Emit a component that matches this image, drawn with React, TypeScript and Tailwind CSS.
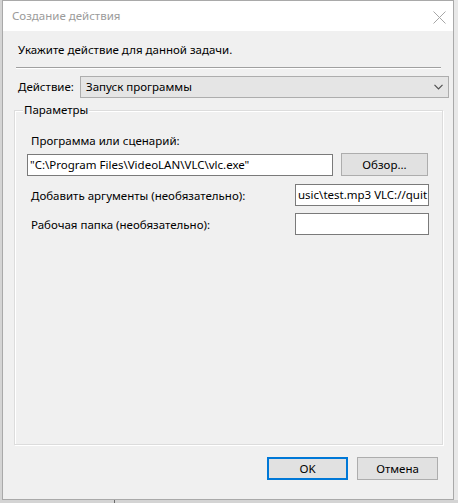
import React from 'react';

const font = { fontFamily: '"Noto Sans", "Open Sans", Arial, sans-serif' };

const TextBox = ({ value, width }: { value?: string; width: string }) => (
  <div className={`${width} h-[22px] bg-white border border-[#7a7a7a] flex items-center overflow-hidden whitespace-nowrap px-[2px]`}>
    {value}
  </div>
);

export default function App() {
  return (
    <div
      className="relative w-[458px] h-[503px] bg-[#d4d4d4] overflow-hidden text-[11.5px] text-black leading-[16px]"
      style={font}
    >
      {/* things behind the dialog */}
      <div className="absolute left-[114px] top-[499px] w-px h-[4px] bg-[#6b6b6b]" />
      <div className="absolute left-[454px] top-0 w-[4px] h-[500px] bg-[#e8e8e8]" />

      <div className="absolute left-[2px] top-0 w-[452px] h-[500px] border border-[#a9a9a9] bg-[#f0f0f0] flex flex-col">
        {/* title bar */}
        <div className="h-[30px] bg-white flex items-center justify-between pl-[9px] pr-[7px] shrink-0">
          <span className="text-[#9b9b9b]">Создание действия</span>
          <svg width="13" height="13" viewBox="0 0 13 13" className="mt-[2px]">
            <path d="M0.5 0.5 L12.5 12.5 M12.5 0.5 L0.5 12.5" stroke="#a6a6a6" strokeWidth="1" fill="none" />
          </svg>
        </div>

        {/* body */}
        <div className="flex flex-col flex-1">
          <div className="mt-[11px] ml-[15px]">Укажите действие для данной задачи.</div>

          <div className="mt-[9px] ml-[13px] w-[425px] h-[2px] border-t border-[#a0a0a0] border-b border-b-white" />

          <div className="mt-[7px] flex items-center">
            <div className="ml-[15px] w-[62px]">Действие:</div>
            <div className="w-[369px] h-[22px] bg-[#e5e5e5] border border-[#adadad] flex items-center justify-between pl-[5px] pr-[5px]">
              <span>Запуск программы</span>
              <svg width="9" height="6" viewBox="0 0 9 6">
                <path d="M0.5 0.8 L4.5 4.8 L8.5 0.8" stroke="#505050" strokeWidth="1.2" fill="none" />
              </svg>
            </div>
          </div>

          {/* group box */}
          <div className="relative mt-[12px] ml-[11px] w-[429px] h-[335px] border border-[#dcdcdc] shadow-[inset_1px_1px_0_#ffffff,1px_1px_0_#ffffff]">
            <span className="absolute left-[8px] -top-[9px] px-[1px] bg-[#f0f0f0]">Параметры</span>

            <div className="mt-[22px] ml-[16px]">Программа или сценарий:</div>

            <div className="mt-[4px] ml-[12px] flex items-center">
              <TextBox width="w-[306px]" value={'"C:\\Program Files\\VideoLAN\\VLC\\vlc.exe"'} />
              <button className="ml-[8px] w-[87px] h-[23px] bg-[#e1e1e1] border border-[#adadad]">Обзор...</button>
            </div>

            <div className="mt-[8px] flex items-center">
              <div className="ml-[16px] w-[264px] pt-[2px]">Добавить аргументы (необязательно):</div>
              <TextBox width="w-[134px]" value={'usic\\test.mp3 VLC://quit'} />
            </div>

            <div className="mt-[7px] flex items-center">
              <div className="ml-[16px] w-[264px] pt-[2px]">Рабочая папка (необязательно):</div>
              <TextBox width="w-[134px]" />
            </div>
          </div>

          <div className="mt-[12px] ml-[264px] flex gap-[9px]">
            <button className="w-[81px] h-[23px] bg-[#e1e1e1] border-2 border-[#0078d7]">OK</button>
            <button className="w-[81px] h-[23px] bg-[#e1e1e1] border border-[#adadad]">Отмена</button>
          </div>
        </div>
      </div>
    </div>
  );
}
